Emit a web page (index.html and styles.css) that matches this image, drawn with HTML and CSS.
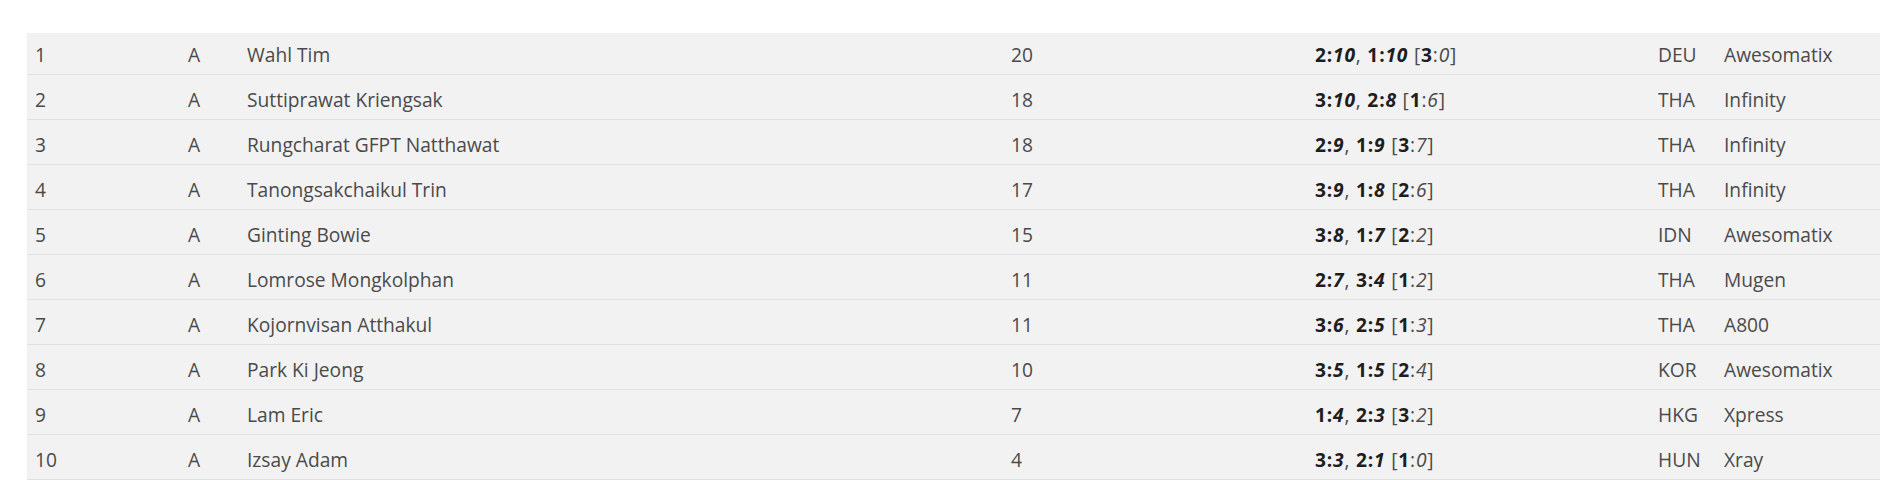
FILE: index.html
```html
<!DOCTYPE html>
<html lang="en">
<head>
<meta charset="utf-8">
<title>Results</title>
<link rel="stylesheet" href="styles.css">
</head>
<body>
<table class="results">
  <colgroup>
    <col class="c-rank"><col class="c-grp"><col class="c-name"><col class="c-pts"><col class="c-score"><col class="c-nat"><col class="c-team">
  </colgroup>
  <tbody>
    <tr><td>1</td><td>A</td><td>Wahl Tim</td><td>20</td><td class="score"><b>2:<i>10</i></b>, <b>1:<i>10</i></b> [<b>3</b>:<i>0</i>]</td><td>DEU</td><td>Awesomatix</td></tr>
    <tr><td>2</td><td>A</td><td>Suttiprawat Kriengsak</td><td>18</td><td class="score"><b>3:<i>10</i></b>, <b>2:<i>8</i></b> [<b>1</b>:<i>6</i>]</td><td>THA</td><td>Infinity</td></tr>
    <tr><td>3</td><td>A</td><td>Rungcharat GFPT Natthawat</td><td>18</td><td class="score"><b>2:<i>9</i></b>, <b>1:<i>9</i></b> [<b>3</b>:<i>7</i>]</td><td>THA</td><td>Infinity</td></tr>
    <tr><td>4</td><td>A</td><td>Tanongsakchaikul Trin</td><td>17</td><td class="score"><b>3:<i>9</i></b>, <b>1:<i>8</i></b> [<b>2</b>:<i>6</i>]</td><td>THA</td><td>Infinity</td></tr>
    <tr><td>5</td><td>A</td><td>Ginting Bowie</td><td>15</td><td class="score"><b>3:<i>8</i></b>, <b>1:<i>7</i></b> [<b>2</b>:<i>2</i>]</td><td>IDN</td><td>Awesomatix</td></tr>
    <tr><td>6</td><td>A</td><td>Lomrose Mongkolphan</td><td>11</td><td class="score"><b>2:<i>7</i></b>, <b>3:<i>4</i></b> [<b>1</b>:<i>2</i>]</td><td>THA</td><td>Mugen</td></tr>
    <tr><td>7</td><td>A</td><td>Kojornvisan Atthakul</td><td>11</td><td class="score"><b>3:<i>6</i></b>, <b>2:<i>5</i></b> [<b>1</b>:<i>3</i>]</td><td>THA</td><td>A800</td></tr>
    <tr><td>8</td><td>A</td><td>Park Ki Jeong</td><td>10</td><td class="score"><b>3:<i>5</i></b>, <b>1:<i>5</i></b> [<b>2</b>:<i>4</i>]</td><td>KOR</td><td>Awesomatix</td></tr>
    <tr><td>9</td><td>A</td><td>Lam Eric</td><td>7</td><td class="score"><b>1:<i>4</i></b>, <b>2:<i>3</i></b> [<b>3</b>:<i>2</i>]</td><td>HKG</td><td>Xpress</td></tr>
    <tr><td>10</td><td>A</td><td>Izsay Adam</td><td>4</td><td class="score"><b>3:<i>3</i></b>, <b>2:<i>1</i></b> [<b>1</b>:<i>0</i>]</td><td>HUN</td><td>Xray</td></tr>
  </tbody>
</table>
</body>
</html>
```

FILE: styles.css
```css
html, body {
  margin: 0;
  padding: 0;
  background: #ffffff;
  overflow: hidden;
}

body {
  padding: 33px 0 0 27px;
  font-family: "Open Sans", "Noto Sans", sans-serif;
  font-size: 19.2px;
  color: #4a4a4a;
}

.results {
  width: 1853px;
  border-collapse: collapse;
  table-layout: fixed;
  background: #f2f2f2;
}

.c-rank { width: 153px; }
.c-grp { width: 59px; }
.c-name { width: 764px; }
.c-pts { width: 304px; }
.c-score { width: 343px; }
.c-nat { width: 66px; }
.c-team { width: 164px; }

.results td {
  height: 39px;
  padding: 5px 8px 0;
  border-bottom: 1px solid #e0e0e0;
  vertical-align: middle;
  white-space: nowrap;
  text-align: left;
  line-height: 24px;
}

.results tr:first-child td {
  height: 39px;
  padding-top: 2px;
}

.results .score {
  letter-spacing: 0.8px;
}

.results b {
  font-weight: 700;
  color: #1e1e1e;
}

.results i {
  font-style: italic;
}

.results td > i {
  color: #4a4a4a;
}
```
